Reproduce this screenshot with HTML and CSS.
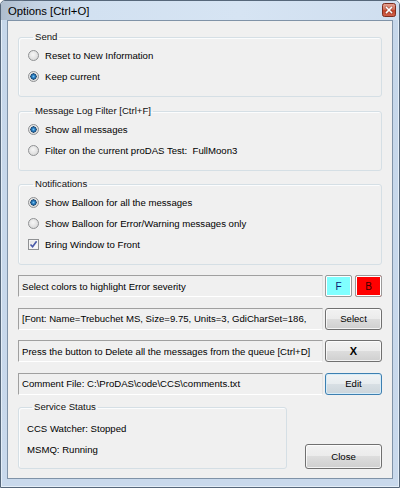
FILE: index.html
```html
<!DOCTYPE html>
<html>
<head>
<meta charset="utf-8">
<link rel="stylesheet" href="styles.css">
</head>
<body>
<div class="window">
  <div class="titlebar">
    <span class="title">Options [Ctrl+O]</span>
    <span class="close-x">
      <svg width="14" height="14" viewBox="0 0 14 14">
        <defs>
          <linearGradient id="cg" x1="0" y1="0" x2="0" y2="1">
            <stop offset="0" stop-color="#e6a493"/>
            <stop offset="0.45" stop-color="#d4735d"/>
            <stop offset="0.5" stop-color="#c2452b"/>
            <stop offset="1" stop-color="#d0604a"/>
          </linearGradient>
        </defs>
        <rect x="0.5" y="0.5" width="13" height="13" rx="2" fill="url(#cg)" stroke="#7d2d1f"/>
        <path d="M4.5 4.5 L9.5 9.5 M9.5 4.5 L4.5 9.5" stroke="#5a1a10" stroke-width="2.6" stroke-linecap="square" opacity="0.5"/>
        <path d="M4.5 4.5 L9.5 9.5 M9.5 4.5 L4.5 9.5" stroke="#ffffff" stroke-width="1.6" stroke-linecap="square"/>
      </svg>
    </span>
  </div>
  <div class="client">
    <fieldset class="group">
      <legend>Send</legend>
      <label class="opt"><input type="radio" name="send"><span>Reset to New Information</span></label>
      <label class="opt"><input type="radio" name="send" checked><span>Keep current</span></label>
    </fieldset>
    <fieldset class="group g-mlf">
      <legend>Message Log Filter [Ctrl+F]</legend>
      <label class="opt"><input type="radio" name="mlf" checked><span>Show all messages</span></label>
      <label class="opt"><input type="radio" name="mlf"><span>Filter on the current proDAS Test:&nbsp; FullMoon3</span></label>
    </fieldset>
    <fieldset class="group g-notif">
      <legend>Notifications</legend>
      <label class="opt"><input type="radio" name="nt" checked><span>Show Balloon for all the messages</span></label>
      <label class="opt"><input type="radio" name="nt"><span>Show Balloon for Error/Warning messages only</span></label>
      <label class="opt"><input type="checkbox" class="chk" checked><span>Bring Window to Front</span></label>
    </fieldset>

    <div class="row row-first">
      <div class="panel">Select colors to highlight Error severity</div>
      <button class="btn btn-f">F</button>
      <button class="btn btn-b">B</button>
    </div>
    <div class="row">
      <div class="panel">[Font: Name=Trebuchet MS, Size=9.75, Units=3, GdiCharSet=186,</div>
      <button class="btn btn-wide">Select</button>
    </div>
    <div class="row">
      <div class="panel">Press the button to Delete all the messages from the queue [Ctrl+D]</div>
      <button class="btn btn-wide btn-x">X</button>
    </div>
    <div class="row">
      <div class="panel">Comment File: C:\ProDAS\code\CCS\comments.txt</div>
      <button class="btn btn-wide btn-focus">Edit</button>
    </div>

    <div class="bottom">
      <fieldset class="group status">
        <legend>Service Status</legend>
        <div class="line">CCS Watcher: Stopped</div>
        <div class="line">MSMQ: Running</div>
      </fieldset>
      <button class="btn btn-close">Close</button>
    </div>
  </div>
</div>
</body>
</html>
```

FILE: styles.css
```css
html, body {
  margin: 0;
  padding: 0;
  background: #ffffff;
}

body {
  font-family: "Liberation Sans", Arial, sans-serif;
  font-size: 9.6px;
  color: #000;
}

.window {
  width: 400px;
  height: 488px;
  box-sizing: border-box;
  border: 1px solid #56677a;
  border-radius: 5px 5px 0 0;
  background: linear-gradient(to bottom, #c6d7ea, #c9d9ec);
  padding: 0 6px 8px 6px;
  display: flex;
  flex-direction: column;
  box-shadow: inset 0 0 0 1px #e4eef8;
}

.titlebar {
  height: 19px;
  margin: 0 -6px;
  padding: 0 3px 0 7px;
  display: flex;
  align-items: flex-start;
  justify-content: space-between;
  background: linear-gradient(to right, #aebdcd 0, #c3d2e2 8%, #d2e1f1 22%, #d6e4f3 60%, #cfdeef 100%);
  border-radius: 4px 4px 0 0;
}

.title {
  font-size: 11.3px;
  line-height: 19px;
  color: #000;
  padding-top: 1px;
}

.close-x {
  display: block;
  width: 14px;
  height: 14px;
  margin-top: 2px;
}

.close-x svg {
  display: block;
}

.client {
  flex: 1;
  background: #f0f0f0;
  border: 1px solid #8093a8;
  padding: 10px 10px 0 10px;
  display: flex;
  flex-direction: column;
  min-height: 0;
}

.group {
  margin: 0;
  border: 1px solid #d5dfe5;
  border-radius: 3px;
  padding: 2px 0 9px 9px;
  min-width: 0;
  box-shadow: inset 1px 1px 0 #fbfcfd;
}

.group legend {
  padding: 0 2px;
  margin-left: 5px;
  line-height: 12px;
  font-size: 9.6px;
  color: #111;
}

.g-mlf {
  margin-top: 8px;
}

.g-notif {
  margin-top: 7px;
}

.opt {
  display: flex;
  align-items: center;
  height: 21px;
}

.opt input {
  -webkit-appearance: none;
  appearance: none;
  width: 11px;
  height: 11px;
  margin: 0 6px 0 0;
  flex: none;
  box-sizing: border-box;
}

.opt input[type="radio"] {
  border-radius: 50%;
  border: 1px solid #8f9193;
  background: radial-gradient(circle at 45% 40%, #f6f6f6 0, #e6e6e6 45%, #d2d2d2 100%);
}

.opt input[type="radio"]:checked {
  background:
    radial-gradient(circle at 50% 50%, #7cc6f2 0, #2f82c4 1.4px, #19568c 2.6px, #2a4f70 3px, transparent 3.3px),
    radial-gradient(circle at 45% 40%, #f6f6f6 0, #e6e6e6 45%, #d2d2d2 100%);
}

.opt input.chk {
  border: 1px solid #8f9193;
  background: linear-gradient(135deg, #e2e2e2, #ffffff);
  box-shadow: inset 0 0 0 1px #f4f4f4;
}

.opt input.chk:checked {
  background:
    url("data:image/svg+xml;utf8,<svg xmlns='http://www.w3.org/2000/svg' width='9' height='9' viewBox='0 0 9 9'><path d='M1.5 4.5 L3.6 6.8 L7.6 1.2' fill='none' stroke='%234a5aa8' stroke-width='1.6'/></svg>") center / 9px 9px no-repeat,
    linear-gradient(135deg, #e2e2e2, #ffffff);
}

.row {
  display: flex;
  gap: 2px;
  height: 22px;
  margin-top: 10.5px;
}

.row-first {
  margin-top: 10px;
}

.panel {
  flex: 1;
  min-width: 0;
  box-sizing: border-box;
  border-top: 1px solid #a0a0a0;
  border-left: 1px solid #a0a0a0;
  border-bottom: 1px solid #ffffff;
  border-right: 1px solid #e3e3e3;
  padding-left: 3px;
  display: flex;
  align-items: center;
  white-space: nowrap;
  overflow: hidden;
}

.btn {
  font-family: "Liberation Sans", Arial, sans-serif;
  font-size: 9.6px;
  color: #000;
  border: 1px solid #707070;
  border-radius: 3px;
  background: linear-gradient(to bottom, #f2f2f2 0%, #ebebeb 50%, #dddddd 50%, #cfcfcf 100%);
  box-shadow: inset 0 0 0 1px rgba(255, 255, 255, 0.75);
  padding: 0;
  margin: 0;
  height: 22px;
  box-sizing: border-box;
  flex: none;
}

.btn-f,
.btn-b {
  width: 27px;
  border: 1px solid #9a9a9a;
  border-radius: 2px;
  box-shadow: inset 0 0 0 1px #ffffff;
  font-size: 10px;
}

.btn-f {
  background: #80ffff;
  color: #0a1a6e;
}

.btn-b {
  background: #ff0000;
  color: #3a0000;
  margin-left: 1px;
}

.btn-wide {
  width: 57px;
}

.btn-x {
  font-weight: bold;
  font-size: 11px;
}

.btn-focus {
  border-color: #3c7fb1;
  box-shadow: inset 0 0 0 1px #d6ecf8;
  background: linear-gradient(to bottom, #f0f3f5 0%, #e7ecef 50%, #d8dfe4 50%, #ccd5db 100%);
}

.bottom {
  display: flex;
  align-items: flex-end;
  justify-content: space-between;
  margin-top: 6.5px;
}

.status {
  width: 269px;
  box-sizing: border-box;
  padding: 4.5px 0 8px 8px;
}

.line {
  height: 21px;
  display: flex;
  align-items: center;
}

.btn-close {
  width: 77px;
  height: 25px;
  margin-bottom: 0;
}
```
